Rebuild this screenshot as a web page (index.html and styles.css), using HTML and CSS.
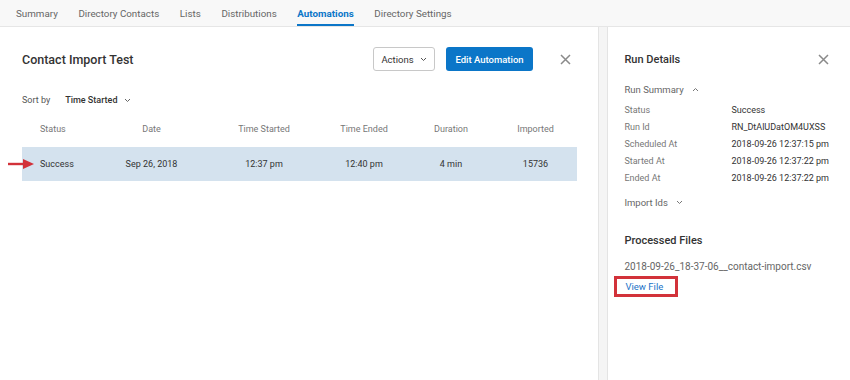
FILE: index.html
```html
<!DOCTYPE html>
<html lang="en">

<head>
    <meta charset="UTF-8">
    <meta name="viewport" content="width=device-width, initial-scale=1.0">
    <title>Automations</title>
    <link rel="stylesheet" href="styles.css">
</head>

<body>
    <nav class="tabs">
        <a class="tab">Summary</a>
        <a class="tab">Directory Contacts</a>
        <a class="tab">Lists</a>
        <a class="tab">Distributions</a>
        <a class="tab active">Automations</a>
        <a class="tab">Directory Settings</a>
    </nav>

    <div class="layout">
        <main class="main">
            <div class="header">
                <h1 class="title">Contact Import Test</h1>
                <div class="header-actions">
                    <button class="btn btn-outline">Actions
                        <svg class="chev" width="7" height="5" viewBox="0 0 7 5"><path d="M1 1l2.5 2.5L6 1" fill="none" stroke="#555" stroke-width="1"/></svg>
                    </button>
                    <button class="btn btn-primary">Edit Automation</button>
                    <svg class="close" width="11" height="11" viewBox="0 0 11 11"><path d="M1 1l9 9M10 1L1 10" stroke="#8a8a8a" stroke-width="1.5"/></svg>
                </div>
            </div>

            <div class="sort">
                <span class="sort-label">Sort by</span>
                <span class="sort-value">Time Started</span>
                <svg class="chev" width="7" height="5" viewBox="0 0 7 5"><path d="M1 1l2.5 2.5L6 1" fill="none" stroke="#666" stroke-width="1"/></svg>
            </div>

            <div class="runs">
                <div class="row head">
                    <span class="cell first">Status</span>
                    <span class="cell">Date</span>
                    <span class="cell">Time Started</span>
                    <span class="cell">Time Ended</span>
                    <span class="cell">Duration</span>
                    <span class="cell">Imported</span>
                </div>
                <div class="row selected">
                    <svg class="pointer" width="26" height="10" viewBox="0 0 26 10"><path d="M0 5h18" stroke="#d2323a" stroke-width="2.4"/><path d="M15 0l11 5-11 5z" fill="#d2323a"/></svg>
                    <span class="cell first">Success</span>
                    <span class="cell">Sep 26, 2018</span>
                    <span class="cell">12:37 pm</span>
                    <span class="cell">12:40 pm</span>
                    <span class="cell">4 min</span>
                    <span class="cell">15736</span>
                </div>
            </div>
        </main>

        <div class="gutter"></div>

        <aside class="side">
            <div class="side-header">
                <h2 class="side-title">Run Details</h2>
                <svg class="close" width="11" height="11" viewBox="0 0 11 11"><path d="M1 1l9 9M10 1L1 10" stroke="#8a8a8a" stroke-width="1.5"/></svg>
            </div>

            <div class="section-toggle">Run Summary
                <svg class="chev" width="7" height="5" viewBox="0 0 7 5"><path d="M1 4l2.5-2.5L6 4" fill="none" stroke="#777" stroke-width="1"/></svg>
            </div>
            <dl class="details">
                <dt>Status</dt><dd>Success</dd>
                <dt>Run Id</dt><dd>RN_DtAlUDatOM4UXSS</dd>
                <dt>Scheduled At</dt><dd>2018-09-26 12:37:15 pm</dd>
                <dt>Started At</dt><dd>2018-09-26 12:37:22 pm</dd>
                <dt>Ended At</dt><dd>2018-09-26 12:37:22 pm</dd>
            </dl>

            <div class="section-toggle import">Import Ids
                <svg class="chev" width="7" height="5" viewBox="0 0 7 5"><path d="M1 1l2.5 2.5L6 1" fill="none" stroke="#777" stroke-width="1"/></svg>
            </div>

            <h3 class="files-title">Processed Files</h3>
            <div class="file-name">2018-09-26_18-37-06__contact-import.csv</div>
            <a class="view-file">View File</a>
        </aside>
    </div>
</body>

</html>
```

FILE: styles.css
```css
body {
    margin: 0;
    padding: 0;
    width: 850px;
    height: 380px;
    overflow: hidden;
    background: #fff;
    font-family: 'Roboto', 'Liberation Sans', sans-serif;
    color: #333;
}

.tabs {
    display: flex;
    height: 27px;
    padding-left: 16px;
    gap: 20.6px;
    background: #f8f8f8;
    border-bottom: 1px solid #e6e6e6;
    box-sizing: border-box;
}

.tab {
    display: flex;
    align-items: center;
    font-size: 9.8px;
    color: #666;
    border-bottom: 2px solid transparent;
    padding-top: 2px;
}

.tab.active {
    color: #0b76c8;
    font-weight: bold;
    border-bottom-color: #0b76c8;
}

.layout {
    display: flex;
    height: 353px;
}

.main {
    width: 556px;
    padding: 20px 21px 0 22px;
}

.header {
    display: flex;
    justify-content: space-between;
    align-items: center;
    height: 24px;
}

.title {
    margin: 0;
    font-size: 12.5px;
    font-weight: 500;
    color: #333;
}

.header-actions {
    display: flex;
    align-items: center;
}

.btn {
    height: 24px;
    font-family: inherit;
    font-size: 9.5px;
    border-radius: 3px;
    box-sizing: border-box;
    white-space: nowrap;
}

.btn-outline {
    background: #fff;
    border: 1px solid #c8c8c8;
    color: #333;
    display: flex;
    align-items: center;
    justify-content: center;
    gap: 6px;
    width: 62px;
    padding: 0;
}

.btn-primary {
    background: #0b76c8;
    border: none;
    color: #fff;
    font-weight: 500;
    margin-left: 11px;
    width: 87px;
    padding: 0;
}

.header-actions .close {
    margin-left: 27px;
    margin-right: 6px;
}

.sort {
    display: flex;
    align-items: center;
    height: 12px;
    margin-top: 23px;
    font-size: 9px;
}

.sort-label {
    color: #555;
    margin-right: 15px;
}

.sort-value {
    font-weight: 500;
    margin-right: 7px;
}

.runs {
    margin-top: 5px;
}

.row {
    display: grid;
    grid-template-columns: 73px 113px 112px 88px 86px 83px;
    align-items: center;
    font-size: 9px;
    position: relative;
}

.row.head {
    height: 36px;
    color: #777;
}

.row.selected {
    height: 34px;
    background: #d4e2ee;
    color: #333;
}

.cell {
    text-align: center;
}

.cell.first {
    text-align: left;
    padding-left: 18px;
}

.pointer {
    position: absolute;
    left: -14px;
    top: 12px;
}

.gutter {
    width: 9px;
    background: #f5f5f5;
    border-left: 1px solid #e4e4e4;
    border-right: 1px solid #e4e4e4;
}

.side {
    flex: 1;
    padding: 20px 21px 0 16px;
    white-space: nowrap;
}

.side-header {
    display: flex;
    justify-content: space-between;
    align-items: center;
    height: 24px;
}

.side-title {
    margin: 0;
    font-size: 11px;
    font-weight: 500;
}

.section-toggle {
    margin-top: 12px;
    height: 12px;
    font-size: 9.5px;
    color: #666;
    display: flex;
    align-items: center;
    gap: 8px;
}

.details {
    display: grid;
    grid-template-columns: 107px 1fr;
    row-gap: 6px;
    margin: 10px 0 0;
    font-size: 9px;
    line-height: 11px;
}

.details dt {
    color: #777;
}

.details dd {
    margin: 0;
    color: #333;
}

.section-toggle.import {
    margin-top: 12px;
}

.files-title {
    margin: 26px 0 0;
    font-size: 11px;
    line-height: 14px;
    font-weight: 500;
}

.file-name {
    margin-top: 13px;
    font-size: 10px;
    line-height: 12px;
    color: #666;
}

.view-file {
    display: inline-block;
    margin: 3px 0 0 -10px;
    padding: 2px 12px 2px 8px;
    border: 3px solid #d2323a;
    font-size: 9.5px;
    line-height: 11px;
    color: #1a73c8;
}
```
